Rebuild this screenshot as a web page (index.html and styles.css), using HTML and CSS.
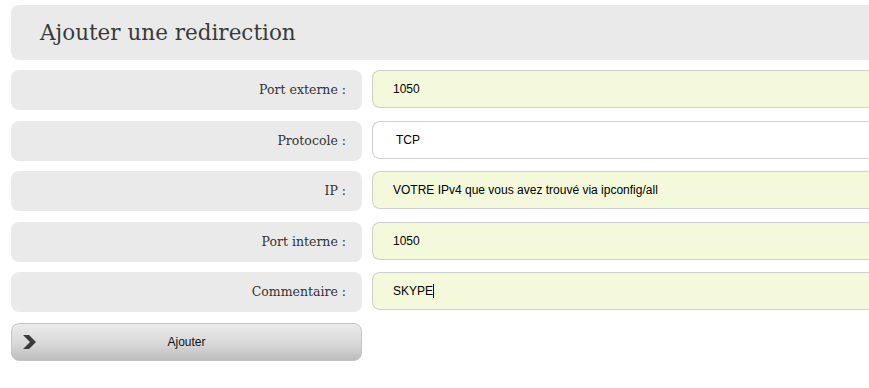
FILE: index.html
```html
<!DOCTYPE html>
<html lang="fr">
<head>
  <meta charset="UTF-8">
  <title>Ajouter une redirection</title>
  <link rel="stylesheet" href="styles.css">
</head>
<body>

  <!-- Bloc redirection -->
  <div class="redirect-box">
    <h2 class="redirect-title">Ajouter une redirection</h2>

    <div class="redirect-form">
      <div class="row-label">Port externe :</div>
      <div class="row-field">1050</div>

      <div class="row-label">Protocole :</div>
      <div class="row-field select-field">TCP</div>

      <div class="row-label">IP :</div>
      <div class="row-field">VOTRE IPv4 que vous avez trouvé via ipconfig/all</div>

      <div class="row-label">Port interne :</div>
      <div class="row-field">1050</div>

      <div class="row-label">Commentaire :</div>
      <div class="row-field">SKYPE<span class="caret"></span></div>

      <div class="add-btn">
        <svg class="add-icon" width="16" height="16" viewBox="0 0 16 16">
          <path d="M2 1 H8 L15 8 L8 15 H2 L9 8 Z" fill="#3a3a3a"/>
        </svg>
        <span>Ajouter</span>
      </div>
    </div>
  </div>

</body>
</html>
```

FILE: styles.css
```css
body {
  margin: 0;
  background: #fff;
  overflow: hidden;
}

.redirect-box {
  width: 900px;
  padding: 5px 0 0 11px;
}

.redirect-title {
  margin: 0;
  height: 55px;
  line-height: 56px;
  padding-left: 29px;
  background: #eaeaea;
  border-radius: 8px 0 0 8px;
  font-family: "DejaVu Serif", Georgia, serif;
  font-weight: normal;
  font-size: 21.5px;
  color: #3a3a3a;
}

.redirect-form {
  display: grid;
  grid-template-columns: 351px 1fr;
  column-gap: 10px;
  row-gap: 10.5px;
  margin-top: 10px;
}

.row-label {
  height: 40px;
  line-height: 40px;
  padding-right: 16px;
  text-align: right;
  background: #eaeaea;
  border-radius: 8px;
  font-family: "DejaVu Serif", Georgia, serif;
  font-size: 12.5px;
  color: #333;
}

.row-field {
  height: 36px;
  line-height: 36px;
  padding-left: 20px;
  background: #f4f9dc;
  border: 1px solid #cfcfcf;
  border-right: none;
  border-radius: 8px 0 0 8px;
  font-family: "Liberation Sans", Arial, sans-serif;
  font-size: 12px;
  color: #000;
}

.select-field {
  background: #fff;
  padding-left: 23px;
}

.caret {
  display: inline-block;
  width: 1px;
  height: 14px;
  background: #000;
  vertical-align: -3px;
}

.add-btn {
  position: relative;
  height: 36px;
  line-height: 36px;
  text-align: center;
  border: 1px solid #c4c4c4;
  border-radius: 8px;
  background: linear-gradient(#ebebeb, #d6d6d6 60%, #bcbcbc);
  font-family: "Liberation Sans", Arial, sans-serif;
  font-size: 12px;
  color: #111;
}

.add-icon {
  position: absolute;
  left: 9px;
  top: 10px;
}
```
